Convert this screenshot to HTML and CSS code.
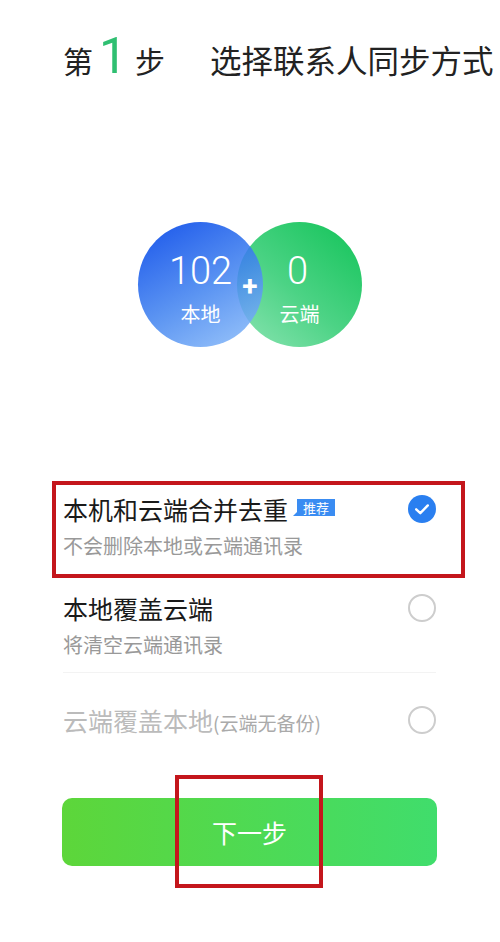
FILE: index.html
```html
<!DOCTYPE html>
<html lang="zh-CN">
<head>
  <meta charset="UTF-8" />
  <title>同步联系人</title>
  <link rel="stylesheet" href="styles.css">
</head>
<body>

  <div class="page">
    <!-- 标题 -->
    <h1 class="step-title">
      <span class="step-word">第</span>
      <span class="step-num">1</span>
      <span class="step-word">步</span>
      <span class="step-text">选择联系人同步方式</span>
    </h1>

    <!-- 本地 + 云端 -->
    <div class="merge">
      <div class="bubble local">
        <div class="count">102</div>
        <div class="label">本地</div>
      </div>
      <div class="bubble cloud">
        <div class="count">0</div>
        <div class="label">云端</div>
      </div>
      <span class="plus">+</span>
    </div>

    <!-- 同步方式 -->
    <ul class="options">
      <li class="option marked">
        <div class="option-text">
          <div class="option-title">本机和云端合并去重<span class="badge">推荐</span></div>
          <div class="option-desc">不会删除本地或云端通讯录</div>
        </div>
        <span class="radio checked">
          <svg viewBox="0 0 28 28" width="28" height="28">
            <circle cx="14" cy="14" r="14" fill="#2a7ff0"/>
            <path d="M8.2 14.3 L12.3 18.2 L19.8 10.4" fill="none" stroke="#fff" stroke-width="2.4" stroke-linecap="round" stroke-linejoin="round"/>
          </svg>
        </span>
      </li>
      <li class="option">
        <div class="option-text">
          <div class="option-title">本地覆盖云端</div>
          <div class="option-desc">将清空云端通讯录</div>
        </div>
        <span class="radio"></span>
      </li>
      <li class="option disabled">
        <div class="option-text">
          <div class="option-title">云端覆盖本地<span class="note">(云端无备份)</span></div>
        </div>
        <span class="radio"></span>
      </li>
    </ul>

    <div class="footer">
      <button class="next marked-btn">下一步</button>
    </div>
  </div>

</body>
</html>
```

FILE: styles.css
```css
/* 전체 */
html, body {
  margin: 0; padding: 0;
  background: #fff;
  font-family: "Noto Sans CJK SC", "Noto Sans", sans-serif;
  color: #222;
}
.page {
  width: 500px;
  padding-bottom: 40px;
  overflow: hidden;
}

/* 标题 */
.step-title {
  margin: 0;
  padding: 31px 0 0 63px;
  display: flex;
  align-items: baseline;
  white-space: nowrap;
  font-weight: normal;
  line-height: 50px;
}
.step-word, .step-text {
  font-size: 30px;
}
.step-text {
  font-size: 31.5px;
  margin-left: 45px;
}
.step-num {
  font-family: Roboto, sans-serif;
  font-weight: 400;
  font-size: 50px;
  color: #2fbf71;
  margin: 0 8px 0 6px;
}

/* 圆圈 */
.merge {
  position: relative;
  display: flex;
  justify-content: center;
  margin-top: 137px;
}
.bubble {
  width: 125px; height: 125px;
  border-radius: 50%;
  display: flex; flex-direction: column;
  align-items: center;
  padding-top: 29px;
  box-sizing: border-box;
  color: #fff;
}
.bubble.local {
  position: relative;
  z-index: 1;
  background: linear-gradient(150deg, rgba(20,84,234,0.93) 10%, rgba(66,132,240,0.86) 55%, rgba(140,190,250,0.85) 100%);
}
.bubble.cloud {
  margin-left: -26px;
  background: linear-gradient(220deg, #1cc660 10%, #4cd385 55%, #8ce4b3 100%);
}
.bubble.cloud .count { margin-left: -4px; }
.count {
  font-family: Roboto, sans-serif;
  font-weight: 300;
  font-size: 38px;
  line-height: 40px;
}
.label {
  font-size: 20px;
  line-height: 24px;
  margin-top: 11px;
}
.plus {
  position: absolute;
  z-index: 2;
  left: 50%; top: 65px;
  transform: translate(-50%, -50%);
  font-family: Roboto, sans-serif;
  font-weight: 700;
  font-size: 28px;
  line-height: 28px;
  color: #fff;
}

/* 选项 */
.options {
  list-style: none;
  margin: 130px 0 0;
  padding: 0 64px 0 63px;
}
.option {
  position: relative;
  display: flex;
  justify-content: space-between;
  padding: 15px 0;
}
.option:nth-child(2) {
  padding-top: 16px;
  padding-bottom: 13px;
  border-bottom: 1px solid #f3f3f3;
}
.option.disabled {
  padding-top: 30px;
}
.option-title {
  display: flex;
  align-items: flex-start;
  font-size: 25px;
  line-height: 34px;
  color: #1a1a1a;
}
.option-desc {
  margin-top: 6px;
  font-size: 20px;
  line-height: 28px;
  color: #999;
}
.disabled .option-title {
  color: #bbb;
  align-items: baseline;
}
.note {
  font-size: 19px;
  color: #aaa;
}

/* 推荐 标签 */
.badge {
  position: relative;
  margin: 7px 0 0 9px;
  padding: 0 6px;
  background: #3a8cf2;
  color: #fff;
  font-size: 13px;
  line-height: 17px;
}
.badge::before {
  content: "";
  position: absolute;
  left: -4px; bottom: 0;
  border-right: 4px solid #3a8cf2;
  border-top: 4px solid transparent;
}

/* 单选 */
.radio {
  width: 28px; height: 28px;
  margin-top: 3px;
  flex: none;
  box-sizing: border-box;
  border: 2px solid #cdcdcd;
  border-radius: 50%;
}
.radio.checked {
  border: none;
}
.radio svg { display: block; }

/* 红框 标记 */
.option.marked::after,
.marked-btn::after {
  content: "";
  position: absolute;
  border: 4px solid #c4161c;
  pointer-events: none;
}
.option.marked::after {
  left: -11px; right: -29px;
  top: 4px; bottom: -3px;
}

/* 下一步 */
.footer {
  padding: 0 63px 0 62px;
  margin-top: 43px;
}
.next {
  position: relative;
  display: block;
  width: 100%;
  height: 68px;
  border: none;
  border-radius: 10px;
  background: linear-gradient(90deg, #5dd63a, #40dd6c);
  color: #fff;
  font-family: "Noto Sans CJK SC", sans-serif;
  font-size: 25px;
  cursor: pointer;
}
.marked-btn::after {
  left: 113px; top: -23px;
  width: 140px; height: 105px;
}
```
